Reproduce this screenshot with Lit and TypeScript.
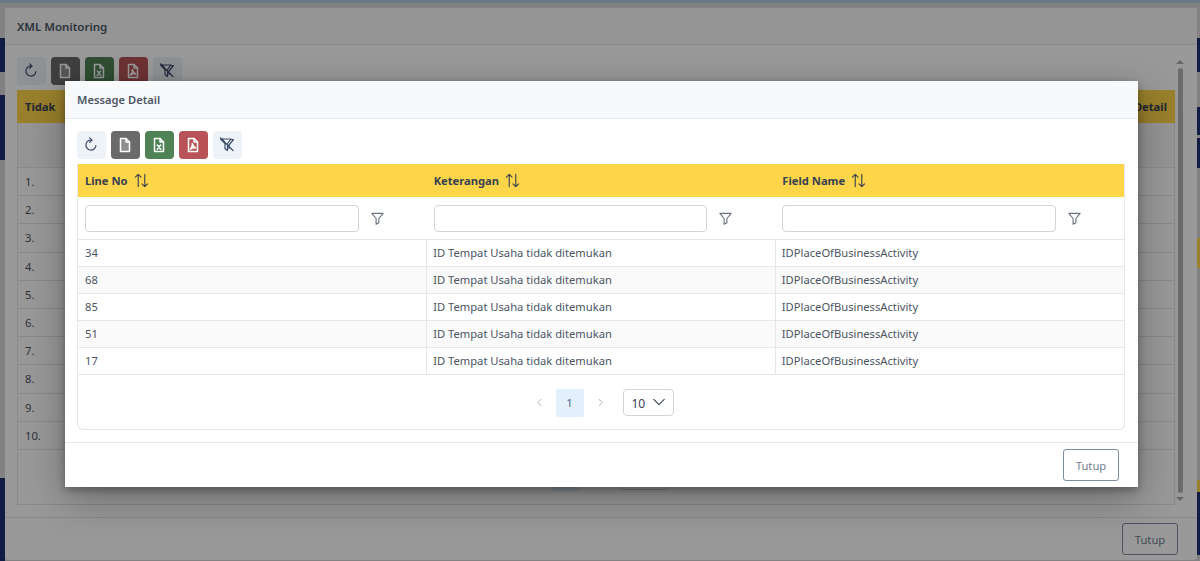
import { LitElement, css, html, svg } from 'lit';
import { customElement } from 'lit/decorators.js';

const icons = {
  refresh: svg`<path d="M8.600 3.100a5 5 0 1 0 4.300 5.400"/><path d="M6.700 .8l2.300 2.300-2.300 2.300"/>`,
  file: svg`<path d="M3.500 1.500h5.500l3.500 3.500v9.500h-9z" fill="currentColor" fill-opacity=".25"/><path d="M9 1.500v3.500h3.500"/>`,
  excel: svg`<path d="M3.500 1.500h5.500l3.500 3.500v9.500h-9z"/><path d="M9 1.500v3.500h3.500"/><path d="M6.300 8l3.400 4.300M9.700 8l-3.400 4.300"/>`,
  pdf: svg`<path d="M3.500 1.500h5.500l3.500 3.500v9.500h-9z"/><path d="M9 1.500v3.500h3.500"/><path d="M7.300 6.500c.4 2.200-.6 4.300-2 5.700 1.800-1.200 3.400-1.600 5.200-1.300-1.500-1-2.500-2.400-3.200-4.400z"/>`,
  filterSlash: svg`<path d="M1.500 2h10.500l-3.500 4.500v7l-2.500-1.800v-5z"/><path d="M3.500 2l3 4.700M12.500 2.500h2l-4.500 5.500v3.500"/><path d="M1.500 .8l12.500 12.700"/>`,
  filter: svg`<path d="M2 2.500h12l-4.500 5.500v4.500l-3 1.500v-6z"/>`,
  left: svg`<path d="M10 3.500L5.500 8l4.500 4.500"/>`,
  right: svg`<path d="M6 3.500L10.500 8 6 12.500"/>`,
  down: svg`<path d="M2 5l6 6 6-6"/>`,
  sort: svg`<path d="M4.500 14.500V1.500M1.500 4.500l3-3 3 3"/><path d="M11.500 1.500v13M8.500 11.500l3 3 3-3"/>`,
};

type IconName = keyof typeof icons;

const icon = (name: IconName, cls = '') =>
  html`<svg class="icon ${cls}" viewBox="0 0 16 16">${icons[name]}</svg>`;

const toolbar = () => html`
  <div class="toolbar">
    <button class="tool soft">${icon('refresh')}</button>
    <button class="tool grey">${icon('file')}</button>
    <button class="tool green">${icon('excel')}</button>
    <button class="tool red">${icon('pdf')}</button>
    <button class="tool soft">${icon('filterSlash')}</button>
  </div>
`;

const pager = () => html`
  <div class="pager">
    ${icon('left', 'nav')}
    <span class="page">1</span>
    ${icon('right', 'nav')}
    <span class="size">10 ${icon('down')}</span>
  </div>
`;

const sortable = (label: string) => html`
  <th><span class="head">${label}${icon('sort', 'sort')}</span></th>
`;

const filterCell = () => html`
  <td><div class="filter"><input type="text" />${icon('filter')}</div></td>
`;

const lines = ['34', '68', '85', '51', '17'];

// bits of the page that stick out beside the first dialog
const patches = [
  { side: 'left', top: 38, height: 34, color: '#1f2d6e' },
  { side: 'left', top: 95, height: 65, color: '#1f2d6e' },
  { side: 'left', top: 478, height: 83, color: '#1f2d6e' },
  { side: 'right', top: 38, height: 34, color: '#1f2d6e' },
  { side: 'right', top: 107, height: 28, color: '#1f2d6e' },
  { side: 'right', top: 138, height: 30, color: '#1f2d6e' },
  { side: 'right', top: 238, height: 30, color: '#ffd54a' },
  { side: 'right', top: 480, height: 12, color: '#ffd54a' },
  { side: 'right', top: 492, height: 63, color: '#1f2d6e' },
];

@customElement('app-root')
export class AppRoot extends LitElement {
  static get styles() {
    return css`
      :host {
        display: block;
        position: relative;
        height: 561px;
        overflow: hidden;
        font-family: 'Noto Sans', sans-serif;
        font-size: 11.200px;
        color: #4b5563;
        background: #fff;
      }

      .icon {
        width: 14px;
        height: 14px;
        fill: none;
        stroke: currentColor;
        stroke-width: 1.200;
        stroke-linecap: round;
        stroke-linejoin: round;
        flex: none;
      }

      .page-bg {
        position: absolute;
        inset: 0;
        background: #d8d8d8;
      }

      .patch {
        position: absolute;
        width: 5px;
      }

      .patch.right {
        right: 0;
        width: 3px;
      }

      .patch.left {
        left: 0;
      }

      .shade {
        position: absolute;
        inset: 0;
        background: rgba(0, 0, 0, 0.4);
      }

      .top-strip {
        position: absolute;
        left: 0;
        right: 0;
        top: 0;
        height: 3px;
        background: #b5c9e0;
      }

      .dialog {
        display: flex;
        flex-direction: column;
        background: #fff;
      }

      .outer {
        position: absolute;
        left: 5px;
        right: 3px;
        top: 8px;
        bottom: 1px;
        border-radius: 3px;
      }

      .dialog-head {
        display: flex;
        align-items: center;
        box-sizing: border-box;
        flex: none;
        padding: 0 12px;
        font-size: 11.200px;
        font-weight: 600;
        background: #f8f9fb;
        border-bottom: 1px solid #e5e7eb;
      }

      .outer .dialog-head {
        height: 37px;
        font-size: 11.500px;
      }

      .outer-body {
        flex: 1;
        min-height: 0;
        display: flex;
        gap: 1px;
        padding: 12px 13px 12px 12px;
      }

      .outer-main {
        flex: 1;
        min-width: 0;
        display: flex;
        flex-direction: column;
      }

      .toolbar {
        display: flex;
        gap: 5.500px;
        height: 28px;
        margin-bottom: 5px;
        flex: none;
      }

      .tool {
        width: 28.500px;
        height: 28px;
        padding: 0;
        border: 0;
        border-radius: 4px;
        display: flex;
        align-items: center;
        justify-content: center;
      }

      .tool .icon {
        width: 16px;
        height: 16px;
      }

      .soft {
        background: #edf3f9;
        color: #3f4d6b;
      }

      .grey {
        background: #6a6a6a;
        color: #fff;
      }

      .green {
        background: #4f8355;
        color: #fff;
      }

      .red {
        background: #b85457;
        color: #fff;
      }

      .grey .icon,
      .green .icon,
      .red .icon {
        stroke-width: 1.500;
      }

      .outer-table {
        flex: 1;
        min-height: 0;
        border: 1px solid #e5e7eb;
        border-top: 0;
        display: flex;
        flex-direction: column;
      }

      .outer-head {
        height: 33px;
        flex: none;
        margin: 0 -1px;
        display: flex;
        align-items: center;
        justify-content: space-between;
        padding: 0 8px;
        font-weight: 700;
        color: #374151;
        background: #ffd54a;
      }

      .outer-filter {
        height: 45px;
        flex: none;
        box-sizing: border-box;
        background: #f8f9fa;
        border-bottom: 1px solid #e5e7eb;
      }

      .outer-row {
        height: 28.200px;
        flex: none;
        box-sizing: border-box;
        display: flex;
        align-items: center;
        padding: 0 7px;
        border-bottom: 1px solid #e5e7eb;
      }

      .outer-table .pager {
        height: 54px;
      }

      .scrollbar {
        width: 8px;
        margin: 3px 0 4px;
        display: flex;
        flex-direction: column;
        align-items: center;
      }

      .scrollbar .arrow-up,
      .scrollbar .arrow-down {
        width: 0;
        height: 0;
        border-left: 4px solid transparent;
        border-right: 4px solid transparent;
      }

      .scrollbar .arrow-up {
        border-bottom: 4px solid #aaa;
      }

      .scrollbar .arrow-down {
        border-top: 4px solid #aaa;
      }

      .thumb {
        flex: 1;
        width: 5px;
        margin: 4px 0;
        border-radius: 3px;
        background: #b5b5b5;
      }

      .outer-foot {
        height: 43px;
        box-sizing: border-box;
        flex: none;
        display: flex;
        justify-content: flex-end;
        align-items: flex-start;
        padding: 5px 19px 0 0;
        border-top: 1px solid #e5e7eb;
      }

      .inner {
        position: absolute;
        left: 65px;
        top: 81px;
        width: 1073px;
        height: 406px;
        box-shadow: 0 3px 8px rgba(0, 0, 0, 0.3), 0 12px 40px rgba(0, 0, 0, 0.3);
      }

      .inner .dialog-head {
        height: 38px;
      }

      .inner-body {
        flex: 1;
        padding: 12px 13px 0 12px;
      }

      .card {
        border: 1px solid #e5e7eb;
        border-top: 0;
        border-radius: 0 0 6px 6px;
        height: 266px;
        box-sizing: border-box;
      }

      table {
        width: 100%;
        table-layout: fixed;
        border-collapse: collapse;
      }

      th {
        height: 33px;
        padding: 0 7px;
        text-align: left;
        font-size: 11.200px;
        font-weight: 700;
        color: #374151;
        background: #ffd54a;
      }

      .head {
        display: flex;
        align-items: center;
        gap: 6px;
      }

      .sort {
        width: 15px;
        height: 15px;
        color: #374151;
      }

      td {
        height: 24px;
        padding: 0 6px 2px;
        font-size: 11.200px;
        border: 1px solid #e5e7eb;
        border-width: 0 1px 1px 0;
      }

      td:first-child {
        padding-left: 7px;
        border-left: 0;
      }

      td:last-child {
        border-right: 0;
      }

      tbody tr:nth-child(odd) td {
        background: #fff;
      }

      tbody tr:nth-child(even) td {
        background: #fafafa;
      }

      .filter-row td {
        height: 42px;
        padding: 0 8px 0 7px;
        background: #f8f9fa;
        border-right: 0;
      }

      .filter {
        display: flex;
        align-items: center;
        gap: 11px;
        color: #6b7280;
      }

      .filter input {
        flex: 1;
        min-width: 0;
        height: 27px;
        box-sizing: border-box;
        background: #fff;
        border: 1px solid #d1d5db;
        border-radius: 4px;
      }

      .filter .icon {
        width: 15px;
        height: 15px;
        margin-right: 34px;
      }

      .pager {
        display: flex;
        justify-content: center;
        align-items: center;
        gap: 11px;
        height: 55px;
        padding-left: 5px;
        color: #4b5563;
      }

      .nav {
        width: 11px;
        height: 11px;
        color: #9ca3af;
      }

      .page {
        width: 28px;
        height: 28px;
        display: flex;
        align-items: center;
        justify-content: center;
        background: #e3f0fb;
        color: #4b6a88;
        border-radius: 2px;
      }

      .size {
        width: 51px;
        height: 27px;
        box-sizing: border-box;
        display: flex;
        align-items: center;
        justify-content: space-between;
        padding: 1px 7px 0 8px;
        margin-left: 6px;
        font-size: 12px;
        background: #fff;
        border: 1px solid #d1d5db;
        border-radius: 4px;
        color: #374151;
      }

      .size .icon {
        width: 14px;
        height: 14px;
        margin-top: -3px;
      }

      .inner-foot {
        height: 45px;
        box-sizing: border-box;
        flex: none;
        display: flex;
        justify-content: flex-end;
        align-items: flex-start;
        padding: 6px 19px 0 0;
        border-top: 1px solid #e5e7eb;
      }

      .close {
        width: 56px;
        height: 32px;
        padding: 0;
        font: inherit;
        background: #fff;
        color: #708090;
        border: 1px solid #7d8ea3;
        border-radius: 3px;
      }
    `;
  }

  render() {
    const rows = Array.from({ length: 10 }, (_, i) => i + 1);
    return html`
      <div class="page-bg">
        ${patches.map(
          (p) => html`<div
            class="patch ${p.side}"
            style="top:${p.top}px;height:${p.height}px;background:${p.color}"
          ></div>`
        )}
        <div class="top-strip"></div>
      </div>

      <section class="dialog outer">
        <div class="dialog-head">XML Monitoring</div>
        <div class="outer-body">
          <div class="outer-main">
            ${toolbar()}
            <div class="outer-table">
              <div class="outer-head"><span>Tidak</span><span>Detail</span></div>
              <div class="outer-filter"></div>
              ${rows.map((n) => html`<div class="outer-row">${n}.</div>`)}
              ${pager()}
            </div>
          </div>
          <div class="scrollbar">
            <div class="arrow-up"></div>
            <div class="thumb"></div>
            <div class="arrow-down"></div>
          </div>
        </div>
        <div class="outer-foot"><button class="close">Tutup</button></div>
      </section>

      <div class="shade"></div>

      <section class="dialog inner">
        <div class="dialog-head">Message Detail</div>
        <div class="inner-body">
          ${toolbar()}
          <div class="card">
            <table>
              <thead>
                <tr>${sortable('Line No')}${sortable('Keterangan')}${sortable('Field Name')}</tr>
              </thead>
              <tbody>
                <tr class="filter-row">${filterCell()}${filterCell()}${filterCell()}</tr>
              </tbody>
              <tbody>
                ${lines.map(
                  (no) => html`
                    <tr>
                      <td>${no}</td>
                      <td>ID Tempat Usaha tidak ditemukan</td>
                      <td>IDPlaceOfBusinessActivity</td>
                    </tr>
                  `
                )}
              </tbody>
            </table>
            ${pager()}
          </div>
        </div>
        <div class="inner-foot"><button class="close">Tutup</button></div>
      </section>
    `;
  }
}
